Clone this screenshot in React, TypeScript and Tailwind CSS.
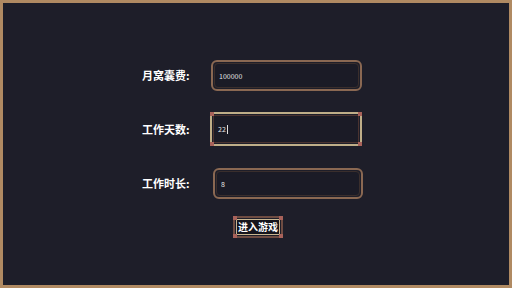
import { useState } from "react";

const Corner = ({ pos }: { pos: string }) => (
  <span className={`absolute h-[4px] w-[4px] bg-[#a8625a] ${pos}`} />
);

export default function App() {
  const [salary, setSalary] = useState("100000");
  const [days, setDays] = useState("22");
  const [hours, setHours] = useState("8");

  const font = { fontFamily: '"Noto Sans CJK SC", "Noto Sans", sans-serif' };

  return (
    <div
      className="h-[288px] w-[512px] overflow-hidden border-[3px] border-[#b08a62] bg-[#1e1e29]"
      style={font}
    >
      <div className="flex flex-col pl-[139px] pt-[57px]">
        {/* row 1 */}
        <div className="flex items-center">
          <span className="w-[69px] text-[11px] font-bold text-white">月窝囊费:</span>
          <div className="flex rounded-[6px] border-[2px] border-[#8a6852] p-[1px]">
            <input
              value={salary}
              onChange={(e) => setSalary(e.target.value)}
              className="block h-[25px] w-[145px] rounded-[4px] border border-[#3a2e2c] bg-[#1b1b26] px-[4px] text-[7px] text-[#e4e4e4] outline-none"
            />
          </div>
        </div>

        {/* row 2 - focused */}
        <div className="mt-[21px] flex items-center">
          <span className="w-[68px] text-[11px] font-bold text-white">工作天数:</span>
          <div className="relative flex border-[2px] border-[#bfae88] p-[1px]">
            <Corner pos="-left-[2px] -top-[2px]" />
            <Corner pos="-right-[2px] -top-[2px]" />
            <Corner pos="-bottom-[2px] -left-[2px]" />
            <Corner pos="-bottom-[2px] -right-[2px]" />
            <div className="flex h-[28px] w-[146px] items-center border border-[#4a3330] bg-[#1b1b26] px-[4px]">
              <span className="text-[7px] leading-none text-[#e8e8e8]">{days}</span>
              <span className="ml-[1px] h-[9px] w-[1px] bg-[#e0e0e0]" />
              <input
                value=""
                onChange={(e) => setDays(days + e.target.value)}
                className="block h-[10px] w-0 flex-1 bg-transparent outline-none"
              />
            </div>
          </div>
        </div>

        {/* row 3 */}
        <div className="mt-[22px] flex items-center">
          <span className="w-[71px] text-[11px] font-bold text-white">工作时长:</span>
          <div className="flex rounded-[6px] border-[2px] border-[#8a6852] p-[1px]">
            <input
              value={hours}
              onChange={(e) => setHours(e.target.value)}
              className="block h-[25px] w-[144px] rounded-[4px] border border-[#3a2e2c] bg-[#1b1b26] px-[4px] text-[7px] text-[#e4e4e4] outline-none"
            />
          </div>
        </div>

        {/* button */}
        <div className="mt-[17px] flex pl-[91px]">
          <button className="relative flex border-[2px] border-[#6e4c42] p-[1px]">
            <Corner pos="-left-[2px] -top-[2px]" />
            <Corner pos="-right-[2px] -top-[2px]" />
            <Corner pos="-bottom-[2px] -left-[2px]" />
            <Corner pos="-bottom-[2px] -right-[2px]" />
            <div className="flex h-[16px] items-center border border-[#c9b690] bg-[#15151d] px-[1px] text-[10px] font-bold leading-none text-white">
              进入游戏
            </div>
          </button>
        </div>
      </div>
    </div>
  );
}
